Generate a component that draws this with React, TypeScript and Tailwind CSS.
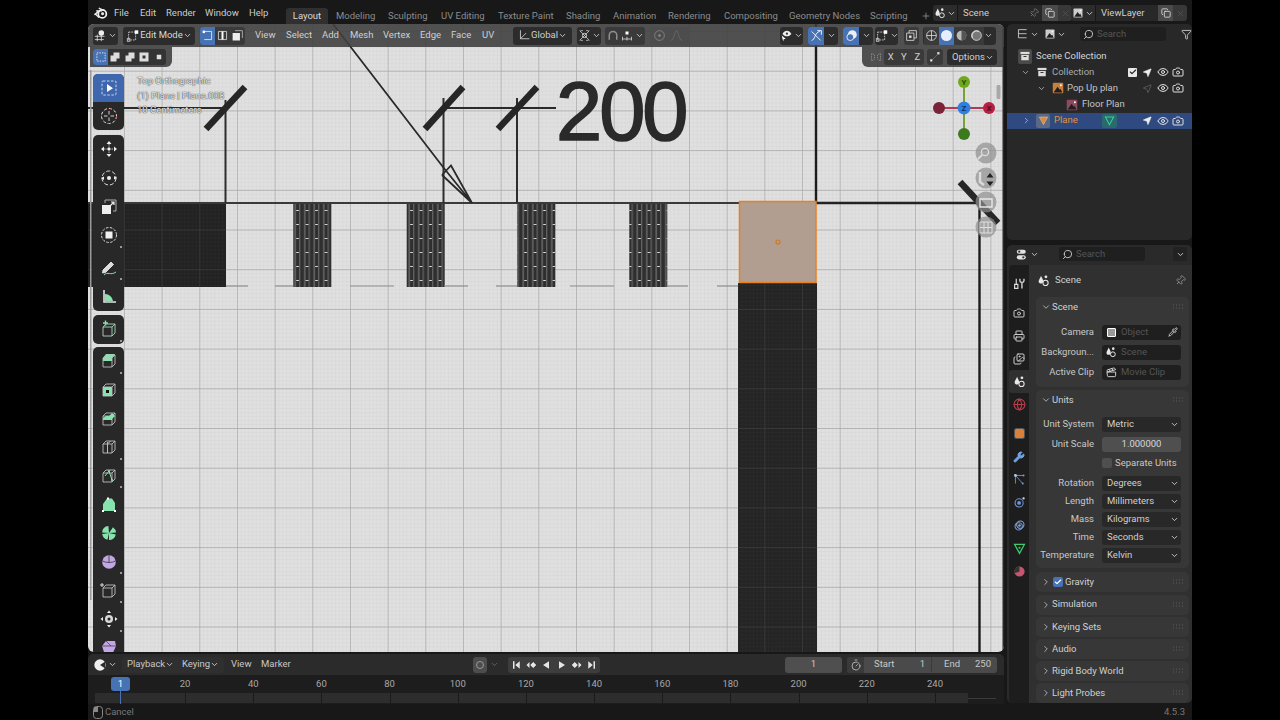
import React from "react";
import {
  Camera,
  Check,
  ChevronDown,
  ChevronRight,
  Clapperboard,
  Copy,
  Eye,
  Funnel,
  Globe,
  Images,
  MousePointer2,
  Pin,
  Pipette,
  Plus,
  Printer,
  Search,
  Timer,
  Wrench,
  X,
} from "lucide-react";

// small shared bits

const Chev = ({ className = "text-[#cfcfcf]" }: { className?: string }) => (
  <ChevronDown size={9} strokeWidth={2.4} className={`shrink-0 ${className}`} />
);

const Svg = ({ s = 16, children }: { s?: number; children: React.ReactNode }) => (
  <svg width={s} height={s} viewBox="0 0 16 16" fill="none" className="shrink-0">
    {children}
  </svg>
);

const BlenderLogo = () => (
  <Svg s={14}>
    <circle cx="9.5" cy="9" r="4.6" stroke="#eee" strokeWidth="2" />
    <circle cx="9.8" cy="8.8" r="1.7" fill="#eee" />
    <path d="M1 9.6 L6 5.8 M3 5.6 H8.5 M6 2.6 L11 5 M5.5 13 L2.5 10" stroke="#eee" strokeWidth="1.6" strokeLinecap="round" />
  </Svg>
);

const SceneIcon = ({ s = 14 }: { s?: number }) => (
  <Svg s={s}>
    <path d="M5 2 C6 5 8 6.5 7.5 9.5 C7 12.5 2.5 12.5 2 9.5 C1.8 7 4 5 5 2Z" fill="#e8e8e8" />
    <circle cx="11" cy="3.5" r="1.7" fill="#e8e8e8" />
    <circle cx="10.5" cy="11" r="3.2" stroke="#e8e8e8" strokeWidth="1.3" />
  </Svg>
);

const CollectionIcon = ({ s = 14 }: { s?: number }) => (
  <Svg s={s}>
    <rect x="2" y="2.5" width="12" height="3" fill="#ddd" />
    <path d="M3 6.5 H13 V13.5 H3Z" fill="#ddd" />
    <rect x="6" y="8" width="4" height="1.3" fill="#333" />
  </Svg>
);

const ImageIcon = ({ bg, s = 14 }: { bg: string; s?: number }) => (
  <Svg s={s}>
    <rect x="2" y="2" width="12" height="12" fill={bg} rx="1" />
    <path d="M3 13 L7.5 6.5 L10 10 L11 9 L13 13Z" fill="#1f1f1f" />
    <circle cx="11.3" cy="4.8" r="1.1" fill="#fff" />
  </Svg>
);

const BoxModeIcon = () => (
  <Svg s={14}>
    <path d="M3 3.5 H11 V12.5 H3Z" stroke="#ccc" strokeWidth="1" strokeDasharray="2 1" />
    <rect x="1.5" y="11" width="3" height="3" fill="none" stroke="#ccc" />
    <rect x="10" y="1.5" width="4" height="4" fill="#fff" />
  </Svg>
);

const Grip = () => (
  <svg width="10" height="6" viewBox="0 0 10 6" className="shrink-0">
    {[0, 3, 6, 9].map((x) =>
      [0.5, 3.5].map((y) => <rect key={`${x}${y}`} x={x} y={y} width="1" height="1" fill="#5c5c5c" />),
    )}
  </svg>
);

// tool shelf

const cube = "M3 6 L6 3 H15 V12 L12 15 H3Z M3 6 H12 V15 M12 6 L15 3";

const ToolIcon = ({ children, more }: { children: React.ReactNode; more?: boolean }) => (
  <div className="relative flex h-[28.7px] items-center justify-center">
    <svg width="18" height="18" viewBox="0 0 18 18" fill="none">
      {children}
    </svg>
    {more && <span className="absolute right-[2px] bottom-[2px] h-[2px] w-[2px] bg-[#999]" />}
  </div>
);

const Outline = () => <path d={cube} stroke="#bdbdbd" strokeWidth="0.9" />;

const ToolShelf = () => (
  <div className="absolute top-[50px] bottom-0 left-[5px] z-10 flex w-[31px] flex-col gap-[5px] overflow-hidden">
    <div className="rounded-[5px] bg-[#282828]">
      <div className="flex h-[28px] items-center justify-center rounded-t-[5px] bg-[#3e67ad]">
        <svg width="18" height="18" viewBox="0 0 18 18" fill="none">
          <rect x="2" y="2" width="14" height="14" rx="1" stroke="#c9d6ee" strokeDasharray="2.5 1.5" />
          <path d="M7 5 L13 9.2 L7 13Z" fill="#fff" />
        </svg>
      </div>
      <div className="flex h-[28px] items-center justify-center">
        <svg width="18" height="18" viewBox="0 0 18 18" fill="none">
          <circle cx="9" cy="9" r="7.5" stroke="#e9e9e9" strokeDasharray="3 2" />
          <circle cx="9" cy="9" r="7.5" stroke="#d8564f" strokeDasharray="2 10" />
          <path d="M9 4 V7.5 M9 10.5 V14 M4 9 H7.5 M10.5 9 H14" stroke="#d5d5d5" />
        </svg>
      </div>
    </div>
    <div className="rounded-[5px] bg-[#282828]">
      <ToolIcon>
        <path d="M9 1 L11.5 4 H6.5Z M9 17 L6.5 14 H11.5Z M1 9 L4 6.5 V11.5Z M17 9 L14 11.5 V6.5Z" fill="#eee" />
        <path d="M9 4 V14 M4 9 H14" stroke="#bbb" strokeDasharray="1.5 1" />
        <circle cx="9" cy="9" r="1.5" fill="#eee" />
      </ToolIcon>
      <ToolIcon>
        <circle cx="9" cy="9" r="7" stroke="#ddd" strokeDasharray="4 2" />
        <circle cx="9" cy="9" r="2" fill="#eee" />
        <path d="M1 9 L4 7.5 V11Z M17 9 L14 7 V10.5Z" fill="#eee" />
      </ToolIcon>
      <ToolIcon>
        <rect x="2" y="7" width="9" height="9" fill="#eee" />
        <path d="M5 5 V2 H16 V13 H13" stroke="#aaa" />
        <path d="M9 9 L14 4 M11 4 H14 V7" stroke="#eee" strokeWidth="1.2" />
      </ToolIcon>
      <ToolIcon more>
        <circle cx="9" cy="9" r="7.5" stroke="#ddd" strokeDasharray="2.5 1.5" />
        <rect x="5.5" y="5.5" width="7" height="7" fill="#f0f0f0" />
      </ToolIcon>
      <div className="mt-[4px]">
        <ToolIcon more>
          <path d="M3 11 L11 3 L13.5 5.5 L5.5 13.5 L2.5 14Z" stroke="#eee" fill="#ddd" strokeWidth="0.8" />
          <path d="M4 16 C8 12 10 17 16 13" stroke="#8fd8ae" />
        </ToolIcon>
      </div>
      <ToolIcon>
        <path d="M4 2 V14 H16" stroke="#e2e2e2" strokeWidth="1.6" />
        <path d="M5 13 V6 A8 8 0 0 1 13 13Z" fill="#8be0b0" />
      </ToolIcon>
    </div>
    <div className="mt-[-1px] rounded-[5px] bg-[#282828]">
      <ToolIcon more>
        <path d="M3 7 L6 4 H15 V13 L12 16 H3Z M3 7 H12 V16 M12 7 L15 4" stroke="#a9d9bd" strokeWidth="0.9" />
        <path d="M3 3 H8 M5.5 0.5 V5.5" stroke="#86e3ad" strokeWidth="1.4" />
      </ToolIcon>
    </div>
    <div className="mt-[-2px] flex-1 rounded-t-[5px] bg-[#282828]">
      <ToolIcon more>
        <path d="M3 6 L6 2 H15 L12 6Z M3 6 H12 V9 H3Z" fill="#86e3ad" />
        <Outline />
      </ToolIcon>
      <ToolIcon>
        <Outline />
        <rect x="3" y="6" width="9" height="9" fill="#86e3ad" />
        <rect x="6" y="9" width="3" height="3" fill="#111" />
      </ToolIcon>
      <ToolIcon>
        <Outline />
        <path d="M3 10 V8 L6 6 H9 L12 9 V10Z M9 6 L12 3 L15 6 L12 9Z" fill="#86e3ad" />
      </ToolIcon>
      <ToolIcon more>
        <Outline />
        <path d="M7.5 4 V15 M7.5 6 L10.5 3" stroke="#bdbdbd" />
      </ToolIcon>
      <ToolIcon more>
        <Outline />
        <path d="M5 9 L9 4 L12 13" stroke="#86e3ad" />
        <circle cx="9" cy="4" r="1" fill="#86e3ad" />
        <circle cx="12" cy="13" r="1" fill="#86e3ad" />
      </ToolIcon>
      <ToolIcon>
        <path d="M3 15 V8 L7 2.5 H12 L15 7 V15Z" fill="#86e3ad" />
        <rect x="2" y="14" width="2" height="2" fill="#fff" />
        <rect x="14" y="14" width="2" height="2" fill="#fff" />
        <rect x="7" y="1.5" width="2" height="2" fill="#fff" />
      </ToolIcon>
      <ToolIcon>
        <path d="M9 9 L8.4 2 A7 7 0 0 0 2.1 8.4Z M9 9 L2.2 10 A7 7 0 0 0 7.5 15.8Z M9 9 L9 16 A7 7 0 0 0 15.8 10.5Z M9 9 L16 8.6 A7 7 0 0 0 13 3.2Z" fill="#86e3ad" />
      </ToolIcon>
      <ToolIcon more>
        <circle cx="9" cy="9" r="6.8" fill="#c3a6e6" />
        <path d="M2.5 8 C6 10 12 10 15.5 8 M9 2.5 V9" stroke="#333" strokeWidth="0.8" />
      </ToolIcon>
      <ToolIcon more>
        <Outline />
        <path d="M0 3 H4 M2 1 V5" stroke="#ddd" />
      </ToolIcon>
      <ToolIcon more>
        <circle cx="9" cy="9" r="4" fill="#d8d8d8" />
        <circle cx="9" cy="9" r="1.5" fill="#222" />
        <path d="M9 0.5 L11 3 H7Z M9 17.5 L7 15 H11Z M0.5 9 L3 7 V11Z M17.5 9 L15 11 V7Z" fill="#eee" />
      </ToolIcon>
      <ToolIcon>
        <path d="M2 7 L6 2 H15 L16 7 L12 16 H5Z" fill="#c3a6e6" />
        <path d="M6 2 L11 7 H2 M11 7 L16 7" stroke="#333" strokeWidth="0.7" />
      </ToolIcon>
    </div>
  </div>
);

// viewport drawing, coordinates are page pixels

const Drawing = () => {
  const doors = [293.3, 406.7, 517.3, 629.3];
  const dashes = [[226, 248], [275, 293], [350, 394], [444, 468], [496, 517], [570, 614], [667, 688], [717, 738]];
  const ticks = [
    [206, 129, 245, 87],
    [425, 129, 463, 87],
    [498, 129, 537, 87],
    [960, 182, 998, 223],
  ];
  return (
    <svg viewBox="88 24 916 628" className="absolute inset-0 h-full w-full">
      <defs>
        <pattern id="minor" patternUnits="userSpaceOnUse" x="312.3" y="70.7" width="3.767" height="3.97">
          <path d="M0 0 H3.767 M0 0 V3.97" stroke="#cfcfcf" strokeWidth="0.6" />
        </pattern>
        <pattern id="major" patternUnits="userSpaceOnUse" x="312.3" y="70.7" width="37.67" height="39.7">
          <path d="M0 0 H37.67 M0 0 V39.7" stroke="#a8a8a8" strokeWidth="1.4" />
        </pattern>
        <pattern id="hatch" patternUnits="userSpaceOnUse" x="293.3" y="203" width="9.5" height="14">
          <rect x="1.5" width="0.9" height="14" fill="#8c8c8c" />
          <rect x="6" width="0.9" height="14" fill="#777" />
          <rect x="3" y="7" width="2.5" height="1" fill="#e2e2e2" />
        </pattern>
      </defs>
      <rect x="88" y="24" width="916" height="628" fill="#e0e0e0" />
      <rect x="88" y="24" width="916" height="628" fill="url(#minor)" />
      <rect x="88" y="24" width="916" height="628" fill="url(#major)" />

      <rect x="88" y="203" width="138" height="84" fill="#222" />
      <rect x="738" y="283" width="79" height="369" fill="#242424" />
      <rect x="88" y="203" width="138" height="84" fill="url(#minor)" opacity="0.08" />
      <rect x="738" y="283" width="79" height="369" fill="url(#minor)" opacity="0.08" />
      <rect x="88" y="203" width="138" height="84" fill="url(#major)" opacity="0.16" />
      <rect x="738" y="283" width="79" height="369" fill="url(#major)" opacity="0.16" />

      {doors.map((x) => (
        <g key={x}>
          <rect x={x} y="203" width="38" height="84" fill="#2f2f2f" />
          <rect x={x} y="203" width="38" height="84" fill="url(#hatch)" />
        </g>
      ))}
      {dashes.map(([a, b]) => (
        <path key={a} d={`M${a} 286 H${b}`} stroke="#8c8c8c" strokeWidth="1.2" />
      ))}

      <path d="M88 203 H739" stroke="#3a3a3a" strokeWidth="1.8" />
      <path d="M816 203 H980" stroke="#222" strokeWidth="2.6" />
      <path d="M88 108 H226 M443 108 H556" stroke="#2a2a2a" strokeWidth="2" />
      <path d="M225.5 100 V203 M443.5 98 V203 M517 98 V203" stroke="#2d2d2d" strokeWidth="2" />
      <path d="M816 24 V203 M979.5 203 V652" stroke="#1c1c1c" strokeWidth="2.4" />
      {ticks.map(([a, b, c, d]) => (
        <path key={a} d={`M${a} ${b} L${c} ${d}`} stroke="#262626" strokeWidth="6.5" />
      ))}
      <path d="M333 24 L443 167 M443 167 L472 203 M442 175 L451 165.5 L472 203 L442 175" fill="none" stroke="#2a2a2a" strokeWidth="1.8" />

      <rect x="739.5" y="201.5" width="76.5" height="81" fill="#b19e91" stroke="#e8801f" strokeWidth="1.5" />
      <circle cx="778" cy="242" r="2" fill="none" stroke="#d9741a" strokeWidth="1.2" />

      <rect x="90" y="70" width="1.5" height="530" fill="#9a9a9a" />
      <rect x="996.5" y="85" width="4" height="14" rx="1" fill="#a8a8a8" />
      <rect x="1002.5" y="24" width="2" height="628" fill="#2a2a2a" />

      {/* axis gizmo */}
      <path d="M964 82 V134" stroke="#6f9a25" strokeWidth="1.8" />
      <path d="M939 108 H989" stroke="#b33a55" strokeWidth="1.8" />
      <circle cx="964" cy="82" r="6" fill="#6fa81c" />
      <circle cx="964" cy="134" r="6" fill="#3c7a1e" />
      <circle cx="989" cy="108" r="6" fill="#b81f45" />
      <circle cx="939" cy="108" r="6" fill="#7b2238" />
      <circle cx="964" cy="108" r="6.5" fill="#2f7fe0" />

      {/* navigation buttons */}
      {[153, 178, 202, 227].map((y) => (
        <circle key={y} cx="986" cy={y} r="10.5" fill="#8f8f8f" opacity="0.7" />
      ))}
      <circle cx="985" cy="152" r="3.6" fill="none" stroke="#ddd" strokeWidth="1.3" />
      <path d="M982 155 L978 159" stroke="#ddd" strokeWidth="1.8" />
      <path d="M990 173 L986.5 177.5 H993.5Z M990 186 L986.5 181.5 H993.5Z" fill="#222" />
      <path d="M980 172 V182 L984 185" stroke="#ddd" strokeWidth="2.4" fill="none" />
      <path d="M980 199 H992 V207 H980Z" fill="none" stroke="#e8e8e8" strokeWidth="1.4" />
      <path d="M980 222 H992 V233 H980Z M984 222 V233 M988 222 V233 M980 227.5 H992" fill="none" stroke="#dfdfdf" strokeWidth="1" />
      <text x="964" y="85" textAnchor="middle" fontFamily="Roboto, sans-serif" fontSize="8" fontWeight="700" fill="#2c4a0c">Y</text>
      <text x="964" y="111" textAnchor="middle" fontFamily="Roboto, sans-serif" fontSize="8" fontWeight="700" fill="#0e2f5e">Z</text>
      <text x="989" y="111" textAnchor="middle" fontFamily="Roboto, sans-serif" fontSize="8" fontWeight="700" fill="#5a0c20">X</text>
    </svg>
  );
};

// viewport header

const Btn = ({ className, children }: { className: string; children: React.ReactNode }) => (
  <div className={`flex h-[18px] shrink-0 items-center justify-center rounded-[3px] ${className}`}>{children}</div>
);

const menuItems = [
  { label: "View", cls: "w-[31px]" },
  { label: "Select", cls: "w-[36px]" },
  { label: "Add", cls: "w-[28px]" },
  { label: "Mesh", cls: "w-[33px]" },
  { label: "Vertex", cls: "w-[37px]" },
  { label: "Edge", cls: "w-[31px]" },
  { label: "Face", cls: "w-[31px]" },
  { label: "UV", cls: "w-[31px]" },
];

const ViewportHeader = () => (
  <div className="relative z-10 flex h-[23px] items-center bg-[#404040]/90 pl-[5px] text-[#cfcfcf]">
    <Btn className="w-[25px] gap-[1px] bg-[#2c2c2c]">
      <Svg s={13}>
        <path d="M1 9 H13 M1 13 H12 M4 7 V15 M9 7 V15" stroke="#ddd" />
        <circle cx="9" cy="5" r="3.4" fill="#eee" />
      </Svg>
      <Chev />
    </Btn>
    <Btn className="ml-[5px] w-[72px] justify-between whitespace-nowrap bg-[#2c2c2c] px-[3px]">
      <BoxModeIcon />
      <span className="text-[#d8d8d8]">Edit Mode</span>
      <Chev />
    </Btn>
    <div className="ml-[5px] flex h-[18px] w-[45px] shrink-0 overflow-hidden rounded-[3px] bg-[#3a3a3a]">
      <div className="flex w-[15px] items-center justify-center bg-[#4772b3]">
        <Svg s={13}>
          <path d="M4 3 H13 V13 H4" stroke="#eee" />
          <rect x="2" y="2" width="3" height="3" fill="#fff" />
        </Svg>
      </div>
      <div className="flex w-[15px] items-center justify-center">
        <Svg s={13}>
          <path d="M3 3 H13 V13 H3Z" stroke="#ddd" />
          <path d="M8 3 V13" stroke="#fff" strokeWidth="2.4" />
        </Svg>
      </div>
      <div className="flex w-[15px] items-center justify-center">
        <Svg s={13}>
          <path d="M2 5 H11 V14 H2Z" fill="#eee" />
          <path d="M5 2 H14 V11" stroke="#bbb" />
        </Svg>
      </div>
    </div>
    <div className="ml-[10px] flex">
      {menuItems.map((m) => (
        <span key={m.label} className={m.cls}>
          {m.label}
        </span>
      ))}
    </div>
    <Btn className="w-[59px] justify-between bg-[#2c2c2c] pr-[3px] pl-[3px]">
      <Svg s={13}>
        <path d="M3 1.5 V12 H14 M3 12 L10 5" stroke="#ddd" />
      </Svg>
      <span>Global</span>
      <Chev />
    </Btn>
    <Btn className="ml-[5px] w-[24px] gap-[1px] bg-[#2c2c2c]">
      <Svg s={13}>
        <circle cx="8" cy="8" r="2.6" stroke="#eee" />
        <path d="M2 2 L14 14 M14 2 L2 14 M3 2 H6 M10 2 H13 M3 14 H6 M10 14 H13" stroke="#ddd" strokeWidth="0.9" />
      </Svg>
      <Chev />
    </Btn>
    <Btn className="ml-[4px] w-[40px] gap-[2px] bg-[#3a3a3a]">
      <Svg s={12}>
        <path d="M3 13 V7 A5 5 0 0 1 13 7 V13" stroke="#8f8f8f" strokeWidth="2" />
      </Svg>
      <Svg s={12}>
        <path d="M2 12 H14 M2 9 V14 M14 9 V14 M8 9 V14" stroke="#e0e0e0" />
        <rect x="6" y="2" width="4" height="4" fill="#fff" />
      </Svg>
      <Chev />
    </Btn>
    <Btn className="ml-[5px] w-[39px] justify-start gap-[4px] bg-[#4d4d4d] pl-[3px]">
      <Svg s={13}>
        <circle cx="8" cy="8" r="6" stroke="#8a8a8a" />
        <circle cx="8" cy="8" r="1.6" fill="#8a8a8a" />
      </Svg>
      <Svg s={13}>
        <path d="M1 14 C5 14 6 2 8 2 C10 2 11 14 15 14" stroke="#6d6d6d" />
      </Svg>
    </Btn>

    <Btn className="ml-[91px] w-[23px] gap-[1px] bg-[#2c2c2c]">
      <Svg s={13}>
        <path d="M3 6 C6 1 11 1 14 6 C11 10 6 10 3 6Z" fill="#eee" />
        <circle cx="8.5" cy="5.7" r="1.4" fill="#333" />
        <path d="M2 8 L7 12 L4.5 12.5 L4 15.5Z" fill="#fff" />
      </Svg>
      <Chev />
    </Btn>
    <Btn className="ml-[5px] w-[30px] overflow-hidden bg-[#2c2c2c]">
      <div className="flex h-full w-[16px] items-center justify-center bg-[#4772b3]">
        <Svg s={13}>
          <path d="M2 14 C6 14 6 4 12 3 M2 3 L13 14 M9 2 H14 V7" stroke="#fff" strokeWidth="1.1" />
        </Svg>
      </div>
      <div className="flex flex-1 justify-center">
        <Chev />
      </div>
    </Btn>
    <Btn className="ml-[5px] w-[30px] overflow-hidden bg-[#2c2c2c]">
      <div className="flex h-full w-[16px] items-center justify-center bg-[#4772b3]">
        <Svg s={13}>
          <circle cx="9" cy="7" r="5.5" fill="#eee" />
          <circle cx="6.5" cy="10" r="4.2" stroke="#fff" fill="#4772b3" />
        </Svg>
      </div>
      <div className="flex flex-1 justify-center">
        <Chev />
      </div>
    </Btn>
    <Btn className="ml-[2px] w-[23px] gap-[1px] bg-[#2c2c2c]">
      <BoxModeIcon />
      <Chev />
    </Btn>
    <Btn className="ml-[6px] w-[15px] bg-[#3a3a3a]">
      <Svg s={13}>
        <path d="M2 5 H11 V14 H2Z M5 5 V2 H14 V11 H11" stroke="#ddd" />
        <rect x="5" y="8" width="3" height="3" fill="#ddd" />
      </Svg>
    </Btn>
    <Btn className="ml-[4px] w-[73px] justify-between bg-[#2c2c2c] pr-[3px]">
      <div className="flex h-full w-[60px] bg-[#3a3a3a]">
        <div className="flex w-[15px] items-center justify-center">
          <Svg s={13}>
            <circle cx="8" cy="8" r="6" stroke="#ddd" />
            <path d="M2 8 H14 M8 2 V14" stroke="#ddd" />
          </Svg>
        </div>
        <div className="flex w-[15px] items-center justify-center bg-[#4772b3]">
          <span className="h-[11px] w-[11px] rounded-full bg-[#e6eefb]" />
        </div>
        <div className="flex w-[15px] items-center justify-center">
          <Svg s={13}>
            <circle cx="8" cy="8" r="6" fill="#bbb" />
            <path d="M8 2 A6 6 0 0 1 8 14Z" fill="#555" />
          </Svg>
        </div>
        <div className="flex w-[15px] items-center justify-center">
          <Svg s={13}>
            <circle cx="8" cy="8" r="6" fill="#777" stroke="#ddd" />
            <path d="M3 11 A6 6 0 0 1 11 3" stroke="#ddd" strokeWidth="1.2" />
          </Svg>
        </div>
      </div>
      <Chev />
    </Btn>
  </div>
);

const ToolSettingsRow = () => (
  <div className="relative z-10 flex items-start justify-between pl-[2px]">
    <div className="flex h-[20px] w-[82px] items-center rounded-br-[6px] bg-[#404040]/90 pl-[3px]">
      <div className="flex h-[16px] w-[73px] items-center overflow-hidden rounded-[3px] bg-[#333]">
        <div className="flex h-full w-[15px] items-center justify-center bg-[#4772b3]">
          <Svg s={12}>
            <rect x="2.5" y="2.5" width="11" height="11" stroke="#fff" strokeDasharray="2 1.4" />
          </Svg>
        </div>
        {[
          "M2 6 H10 V14 H2Z M6 2 H14 V10 H10 V6 H6Z",
          "M6 2 H14 V10 H6Z M2 6 H6 V10 H10 V14 H2Z",
          "M2 2 H14 V14 H2Z M6 6 V10 H10 V6Z",
          "M5 5 H11 V11 H5Z",
        ].map((d) => (
          <div key={d} className="flex h-full w-[14.5px] items-center justify-center">
            <Svg s={12}>
              <path d={d} fill="#ddd" fillRule="evenodd" />
            </Svg>
          </div>
        ))}
      </div>
    </div>
    <div className="mr-[1px] flex h-[20px] w-[141px] items-center rounded-bl-[6px] bg-[#404040]/90 pl-[8px] text-[#d0d0d0]">
      <Svg s={12}>
        <path d="M2 3 L6 5 V11 L2 13Z M14 3 L10 5 V11 L14 13Z" stroke="#9a9a9a" strokeDasharray="1.5 1" />
      </Svg>
      <div className="ml-[2px] flex h-[16px] w-[40px] items-center rounded-[3px] bg-[#3a3a3a]">
        <span className="w-[13.3px] text-center">X</span>
        <span className="w-[13.3px] text-center">Y</span>
        <span className="w-[13.3px] text-center">Z</span>
      </div>
      <div className="ml-[3px] flex h-[16px] w-[16px] items-center justify-center rounded-[3px] bg-[#3a3a3a]">
        <Svg s={12}>
          <path d="M3 13 L13 3" stroke="#aaa" strokeDasharray="2 2" />
          <rect x="1.5" y="11" width="3" height="3" fill="#ddd" />
          <rect x="11" y="1.5" width="3" height="3" fill="#ddd" />
        </Svg>
      </div>
      <div className="ml-[4px] flex h-[16px] w-[50px] items-center justify-between rounded-[3px] bg-[#2c2c2c] px-[5px]">
        <span>Options</span>
        <Chev />
      </div>
    </div>
  </div>
);

const Viewport = () => (
  <div className="relative h-[628px] overflow-hidden rounded-[6px]">
    <Drawing />
    <ViewportHeader />
    <ToolSettingsRow />
    <ToolShelf />
    <div className="absolute top-[50px] left-[49px] z-10 flex flex-col text-[9.5px] leading-[14.5px] text-[#ececec] [text-shadow:0_0_1px_#333,0_0_1px_#333]">
      <span>Top Orthographic</span>
      <span>(1) Plane | Plane.008</span>
      <span>10 Centimeters</span>
    </div>
    <span className="absolute top-[38px] left-[468px] font-['Liberation_Sans',sans-serif] text-[83px] leading-[100px] tracking-[-3px] text-[#2a2a2a] [-webkit-text-stroke:1.6px_#2a2a2a]">
      200
    </span>
  </div>
);

// timeline

const frames = [20, 40, 60, 80, 100, 120, 140, 160, 180, 200, 220, 240];

const Timeline = () => (
  <div className="mt-[2px] h-[50px] overflow-hidden rounded-t-[5px]">
    <div className="flex h-[21px] items-center bg-[#2b2b2b] pl-[5px] text-[#c8c8c8]">
      <div className="flex w-[24px] items-center justify-center gap-[1px]">
        <Svg s={14}>
          <circle cx="8" cy="8" r="6.5" fill="#eee" />
          <path d="M8 8 L14 4 V12Z" fill="#2b2b2b" />
        </Svg>
        <Chev />
      </div>
      <div className="ml-[5px] flex h-[16px] w-[55px] items-center justify-between rounded-l-[3px] bg-[#2f2f2f] px-[5px]">
        <span>Playback</span>
        <Chev />
      </div>
      <div className="flex h-[16px] w-[47px] items-center justify-between rounded-r-[3px] bg-[#2f2f2f] px-[5px]">
        <span>Keying</span>
        <Chev />
      </div>
      <span className="w-[30px] pl-[7px]">View</span>
      <span className="w-[40px] pl-[7px]">Marker</span>
      <div className="ml-[179px] flex h-[16px] w-[14px] items-center justify-center rounded-[3px] bg-[#4d4d4d]">
        <span className="h-[8px] w-[8px] rounded-full border border-[#999]" />
      </div>
      <div className="flex w-[14px] justify-center">
        <Chev className="text-[#666]" />
      </div>
      <div className="ml-[7px] flex h-[16px] w-[92px] items-center rounded-[3px] bg-[#3d3d3d]">
        {[
          "M4 3 H6 V13 H4Z M13 3 V13 L7 8Z",
          "M6 4 V12 L2 8Z M11 4 L15 8 L11 12 L7 8Z",
          "M12 3 V13 L4 8Z",
          "M4 3 V13 L12 8Z",
          "M5 4 L9 8 L5 12 L1 8Z M10 4 L14 8 L10 12Z",
          "M3 3 V13 L9 8Z M10 3 H12 V13 H10Z",
        ].map((d) => (
          <div key={d} className="flex w-[15.3px] justify-center">
            <Svg s={12}>
              <path d={d} fill="#e6e6e6" />
            </Svg>
          </div>
        ))}
      </div>
      <div className="ml-[185px] flex h-[16px] w-[57px] items-center justify-center rounded-[3px] bg-[#4f4f4f]">1</div>
      <div className="ml-[5px] flex h-[16px] w-[150px] items-center rounded-[3px] bg-[#4a4a4a]">
        <div className="flex h-full w-[17px] items-center justify-center rounded-l-[3px] bg-[#3a3a3a]">
          <Timer size={12} strokeWidth={1.6} />
        </div>
        <div className="flex w-[66px] justify-between pr-[5px] pl-[10px]">
          <span>Start</span>
          <span>1</span>
        </div>
        <div className="ml-[1px] flex w-[66px] justify-between border-l border-[#3a3a3a] pr-[6px] pl-[12px]">
          <span>End</span>
          <span>250</span>
        </div>
      </div>
    </div>
    <div className="relative h-[29px] bg-[#1d1d1d] text-[#a8a8a8]">
      <div className="flex h-[18px] items-center pl-[63px]">
        {frames.map((f) => (
          <span key={f} className="w-[68.18px] text-center">
            {f}
          </span>
        ))}
      </div>
      <div className="flex items-center">
        <div className="ml-[7px] flex h-[10px] w-[873px] overflow-hidden bg-[#2d2d2d] pl-[90px]">
          {frames.map((f) => (
            <span key={f} className="w-[68.18px] shrink-0 border-l border-[#1a1a1a]" />
          ))}
        </div>
        <span className="h-[1px] w-[28px] bg-[#3a3a3a]" />
      </div>
      <div className="absolute top-[2px] left-[23px] flex h-[14px] w-[19px] items-center justify-center rounded-[3px] bg-[#4772b3] text-white">
        1
      </div>
      <div className="absolute top-[16px] left-[32px] h-[13px] w-[1px] bg-[#4772b3]" />
    </div>
  </div>
);

// outliner

const Vis = ({ arrow = true }: { arrow?: boolean }) => (
  <div className="ml-auto flex w-[50px] items-center justify-between pr-[8px] text-[#e0e0e0]">
    {arrow ? (
      <MousePointer2 size={11} fill="#eee" strokeWidth={1.2} className="-scale-x-100" />
    ) : (
      <MousePointer2 size={11} strokeWidth={1} className="-scale-x-100 text-[#888]" />
    )}
    <Eye size={12} strokeWidth={2} />
    <Camera size={12} strokeWidth={2} />
  </div>
);

const Outliner = () => (
  <div className="h-[216px] overflow-hidden rounded-[5px] bg-[#282828] text-[#c4c4c4]">
    <div className="flex h-[20px] items-center pl-[9px]">
      <div className="flex w-[21px] items-center gap-[1px]">
        <Svg s={13}>
          <path d="M3 2 H13 M5 7 H13 M5 12 H13 M3 2 V12 H5 M3 7 H5" stroke="#ddd" />
        </Svg>
        <Chev />
      </div>
      <div className="ml-[7px] flex w-[21px] items-center gap-[1px]">
        <ImageIcon bg="#ccc" s={12} />
        <Chev />
      </div>
      <div className="ml-[15px] flex h-[14px] w-[87px] items-center gap-[3px] rounded-[3px] bg-[#1f1f1f] pl-[3px] text-[#555]">
        <Search size={11} className="-scale-x-100 text-[#ccc]" />
        <span>Search</span>
      </div>
      <Funnel size={11} className="ml-[15px] text-[#ccc]" />
    </div>
    <div className="mt-[4px] flex h-[16px] items-center pl-[11px]">
      <div className="flex h-[15px] w-[14px] items-center justify-center rounded-[2px] bg-[#4a4a4a]">
        <CollectionIcon s={12} />
      </div>
      <span className="ml-[4px] text-[#d5d5d5]">Scene Collection</span>
    </div>
    <div className="flex h-[16px] items-center pl-[14px]">
      <ChevronDown size={9} />
      <span className="ml-[6px]">
        <CollectionIcon s={12} />
      </span>
      <span className="ml-[4px] text-[#aaa]">Collection</span>
      <div className="ml-auto flex items-center">
        <span className="mr-[5px] flex h-[9px] w-[9px] items-center justify-center rounded-[1px] bg-[#e8e8e8] text-[#222]">
          <Check size={8} strokeWidth={3.5} />
        </span>
        <Vis />
      </div>
    </div>
    <div className="flex h-[16.5px] items-center pl-[30px]">
      <ChevronDown size={9} />
      <span className="ml-[5px]">
        <ImageIcon bg="#c77f3e" />
      </span>
      <span className="ml-[2px]">Pop Up plan</span>
      <Vis arrow={false} />
    </div>
    <div className="flex h-[16px] items-center pl-[58px]">
      <ImageIcon bg="#8d4a5e" />
      <span className="ml-[3px]">Floor Plan</span>
    </div>
    <div className="flex h-[16px] items-center bg-[#2f4a80] pl-[15px]">
      <ChevronRight size={9} />
      <span className="ml-[5px] flex h-[14px] w-[14px] items-center justify-center rounded-[2px] bg-[#5a6a86]">
        <Svg s={11}>
          <path d="M2 3 H14 L8 14Z" fill="#d98a3f" stroke="#e8b98b" />
        </Svg>
      </span>
      <span className="ml-[4px] text-[#e0913f]">Plane</span>
      <span className="ml-[24px] flex h-[14px] w-[15px] items-center justify-center rounded-[2px] bg-[#2a6a6e]">
        <Svg s={11}>
          <path d="M2 3 H14 L8 14Z" stroke="#35d29a" strokeWidth="1.5" />
        </Svg>
      </span>
      <Vis />
    </div>
  </div>
);

// properties

const TabIcon = ({ active, children }: { active?: boolean; children: React.ReactNode }) => (
  <div className={`flex h-[23px] items-center justify-center rounded-l-[3px] ${active ? "bg-[#303030]" : ""}`}>
    {children}
  </div>
);

const Tabs = () => (
  <div className="mt-[2px] ml-[2px] flex w-[20px] shrink-0 flex-col gap-[6px] rounded-l-[4px] bg-[#1d1d1d] pt-[7px] text-[#ccc]">
    <TabIcon>
      <Svg s={13}>
        <path d="M4 2 V9 M2 9 H6 V14 H2Z" stroke="#ddd" strokeWidth="1.4" />
        <path d="M11 14 V7 M8.5 2 V5 C8.5 7 13.5 7 13.5 5 V2" stroke="#ddd" strokeWidth="1.6" />
      </Svg>
    </TabIcon>
    <div className="flex flex-col">
      <TabIcon>
        <Camera size={12} />
      </TabIcon>
      <TabIcon>
        <Printer size={12} />
      </TabIcon>
      <TabIcon>
        <Images size={12} />
      </TabIcon>
      <TabIcon active>
        <SceneIcon s={13} />
      </TabIcon>
      <TabIcon>
        <Globe size={13} className="text-[#b5404c]" />
      </TabIcon>
    </div>
    <div className="flex flex-col">
      <TabIcon>
        <span className="h-[9px] w-[9px] rounded-[1px] bg-[#d9803a] outline outline-[#555]" />
      </TabIcon>
      <TabIcon>
        <Wrench size={12} fill="#6da4e8" className="text-[#6da4e8]" />
      </TabIcon>
      <TabIcon>
        <Svg s={13}>
          <path d="M3 3 L13 3 M3 3 L12 13 M3 3 V13" stroke="#7a9fd6" />
          <circle cx="3" cy="3" r="1.7" fill="#b6cdf0" />
          <circle cx="13" cy="3" r="1.2" fill="#7a9fd6" />
          <circle cx="12" cy="13" r="1.2" fill="#7a9fd6" />
        </Svg>
      </TabIcon>
      <TabIcon>
        <Svg s={13}>
          <circle cx="7.5" cy="8.5" r="5" stroke="#6d94d4" strokeWidth="1.3" />
          <circle cx="7.5" cy="8.5" r="2.4" fill="#6d94d4" />
          <circle cx="13" cy="3" r="1.4" fill="#ddd" />
        </Svg>
      </TabIcon>
      <TabIcon>
        <Svg s={13}>
          <circle cx="7" cy="9" r="4.5" stroke="#6d94d4" strokeWidth="1.3" />
          <circle cx="9" cy="7" r="4.5" stroke="#88a8df" strokeWidth="1.3" />
          <circle cx="8" cy="8" r="1.6" fill="#88a8df" />
        </Svg>
      </TabIcon>
      <TabIcon>
        <Svg s={13}>
          <path d="M2 3 H14 L8 14Z" stroke="#3ecb6d" strokeWidth="1.6" />
          <circle cx="8" cy="7" r="1.3" fill="#3ecb6d" />
        </Svg>
      </TabIcon>
      <TabIcon>
        <Svg s={13}>
          <circle cx="8" cy="8" r="6.3" fill="#c4566f" />
          <path d="M8 8 V1.7 A6.3 6.3 0 0 0 2 10Z" fill="#333" />
        </Svg>
      </TabIcon>
    </div>
  </div>
);

const PanelHead = ({ title, open = true, check }: { title: string; open?: boolean; check?: boolean }) => (
  <div className="flex h-[20px] items-center pr-[6px] pl-[5px] text-[#d0d0d0]">
    {open ? <ChevronDown size={10} strokeWidth={1.8} /> : <ChevronRight size={10} strokeWidth={1.8} />}
    {check && (
      <span className="ml-[2px] flex h-[10px] w-[10px] items-center justify-center rounded-[2px] bg-[#4772b3] text-white">
        <Check size={8} strokeWidth={3.5} />
      </span>
    )}
    <span className={check ? "ml-[2px]" : "ml-[1px]"}>{title}</span>
    <span className="ml-auto">
      <Grip />
    </span>
  </div>
);

const Row = ({ label, cls, children }: { label: string; cls: string; children: React.ReactNode }) => (
  <div className={`flex items-center ${cls}`}>
    <span className="mr-[8px] w-[58px] whitespace-nowrap text-right text-[#c8c8c8]">{label}</span>
    {children}
  </div>
);

const DataField = ({ icon, text, extra }: { icon: React.ReactNode; text: string; extra?: React.ReactNode }) => (
  <div className="flex h-[15px] w-[79px] items-center rounded-[3px] bg-[#1f1f1f] pl-[2px]">
    <span className="flex w-[14px] justify-center">{icon}</span>
    <span className="ml-[3px] text-[#555]">{text}</span>
    {extra && <span className="mr-[3px] ml-auto">{extra}</span>}
  </div>
);

const Select = ({ value }: { value: string }) => (
  <div className="flex h-[15px] w-[79px] items-center justify-between rounded-[3px] bg-[#282828] pr-[2px] pl-[5px] text-[#cfcfcf]">
    <span>{value}</span>
    <Chev />
  </div>
);

const collapsed = ["Simulation", "Keying Sets", "Audio", "Rigid Body World", "Light Probes"];

const unitRows = [
  { label: "Rotation", value: "Degrees" },
  { label: "Length", value: "Millimeters" },
  { label: "Mass", value: "Kilograms" },
  { label: "Time", value: "Seconds" },
  { label: "Temperature", value: "Kelvin" },
];

const Properties = () => (
  <div className="mt-[5px] h-[458px] overflow-hidden rounded-[5px] bg-[#2a2a2a]">
    <div className="flex h-[18px] items-center pl-[9px]">
      <div className="flex w-[21px] items-center gap-[1px]">
        <Svg s={13}>
          <rect x="1" y="2" width="11" height="5" rx="2.5" fill="#e2e2e2" />
          <rect x="1" y="9" width="11" height="5" rx="2.5" fill="#e2e2e2" />
          <circle cx="4" cy="4.5" r="1.4" fill="#333" />
          <circle cx="9" cy="11.5" r="1.4" fill="#333" />
        </Svg>
        <Chev />
      </div>
      <div className="ml-[22px] flex h-[14px] w-[86px] items-center gap-[3px] rounded-[3px] bg-[#1f1f1f] pl-[3px] text-[#555]">
        <Search size={11} className="-scale-x-100 text-[#ccc]" />
        <span>Search</span>
      </div>
      <div className="ml-[28px] flex h-[14px] w-[14px] items-center justify-center rounded-[2px] bg-[#222]">
        <Chev />
      </div>
    </div>
    <div className="flex h-[440px]">
      <Tabs />
      <div className="mt-[2px] flex flex-1 flex-col overflow-hidden bg-[#303030] pr-[3px] pl-[7px]">
        <div className="flex h-[30px] shrink-0 items-center pr-[3px] pl-[1px] text-[#d2d2d2]">
          <SceneIcon s={13} />
          <span className="ml-[5px]">Scene</span>
          <Pin size={11} className="ml-auto rotate-45 text-[#8a8a8a]" />
        </div>
        <div className="mt-[2px] flex flex-col gap-[2.2px]">
          <div className="rounded-[5px] bg-[#373737] pb-[5px]">
            <PanelHead title="Scene" />
            <div className="mt-[5px]">
              <Row label="Camera" cls="h-[20px]">
                <DataField
                  icon={<span className="block h-[9px] w-[9px] rounded-[1px] border border-white bg-[#999]" />}
                  text="Object"
                  extra={<Pipette size={10} className="text-[#ddd]" />}
                />
              </Row>
              <Row label="Backgroun..." cls="h-[20px]">
                <DataField icon={<SceneIcon s={12} />} text="Scene" />
              </Row>
              <Row label="Active Clip" cls="h-[20px]">
                <DataField icon={<Clapperboard size={11} className="text-[#ddd]" />} text="Movie Clip" />
              </Row>
            </div>
          </div>
          <div className="mt-[1px] rounded-[5px] bg-[#373737] pb-[4px]">
            <PanelHead title="Units" />
            <div className="mt-[4px]">
              <Row label="Unit System" cls="h-[20px]">
                <Select value="Metric" />
              </Row>
              <Row label="Unit Scale" cls="h-[20px]">
                <div className="flex h-[15px] w-[79px] items-center justify-center rounded-[3px] bg-[#4f4f4f] text-[#d8d8d8]">
                  1.000000
                </div>
              </Row>
              <div className="flex h-[18px] items-center pl-[66px]">
                <span className="h-[10px] w-[10px] rounded-[2px] bg-[#4f4f4f]" />
                <span className="ml-[3px] text-[#c8c8c8]">Separate Units</span>
              </div>
              <div className="mt-[2px]">
                {unitRows.map((r) => (
                  <Row key={r.label} label={r.label} cls="h-[18px]">
                    <Select value={r.value} />
                  </Row>
                ))}
              </div>
            </div>
          </div>
          <div className="mt-[2px] rounded-[5px] bg-[#373737]">
            <PanelHead title="Gravity" open={false} check />
          </div>
          {collapsed.map((title) => (
            <div key={title} className="rounded-[5px] bg-[#373737]">
              <PanelHead title={title} open={false} />
            </div>
          ))}
        </div>
      </div>
    </div>
  </div>
);

// top bar

const appMenu = [
  { label: "File", cls: "w-[26px]" },
  { label: "Edit", cls: "w-[26px]" },
  { label: "Render", cls: "w-[39px]" },
  { label: "Window", cls: "w-[44px]" },
  { label: "Help", cls: "w-[37px]" },
];

const workspaces = [
  { label: "Modeling", cls: "w-[52px]" },
  { label: "Sculpting", cls: "w-[53px]" },
  { label: "UV Editing", cls: "w-[57px]" },
  { label: "Texture Paint", cls: "w-[68px]" },
  { label: "Shading", cls: "w-[47px]" },
  { label: "Animation", cls: "w-[55px]" },
  { label: "Rendering", cls: "w-[56px]" },
  { label: "Compositing", cls: "w-[65px]" },
  { label: "Geometry Nodes", cls: "w-[81px]" },
  { label: "Scripting", cls: "w-[51px]" },
];

const TopBar = () => (
  <div className="flex h-[24px] shrink-0 items-stretch text-[#8c8c8c]">
    <div className="flex w-[26px] items-center justify-center pt-[2px]">
      <BlenderLogo />
    </div>
    {appMenu.map((m) => (
      <div key={m.label} className={`flex items-center pt-[2px] text-[#cccccc] ${m.cls}`}>
        {m.label}
      </div>
    ))}
    <div className="flex h-[16px] w-[42px] items-center justify-center self-end rounded-t-[3px] bg-[#303030] text-[#d8d8d8]">
      Layout
    </div>
    <div className="ml-[8px] flex h-[16px] self-end">
      {workspaces.map((w) => (
        <div key={w.label} className={`flex items-center whitespace-nowrap ${w.cls}`}>
          {w.label}
        </div>
      ))}
    </div>
    <div className="flex h-[16px] w-[12px] items-center self-end">
      <Plus size={10} />
    </div>
    <div className="flex items-center pt-[2px]">
      <div className="flex h-[16px] w-[24px] items-center justify-center gap-[1px] rounded-l-[3px] bg-[#2c2c2c]">
        <SceneIcon s={12} />
        <Chev />
      </div>
      <div className="ml-[1px] flex h-[16px] w-[84px] items-center rounded-[1px] bg-[#282828] pl-[5px] text-[#cfcfcf]">
        <span>Scene</span>
        <Pin size={10} className="ml-auto mr-[3px] rotate-45 text-[#777]" />
      </div>
      <div className="flex h-[16px] w-[16px] items-center justify-center bg-[#4a4a4a]">
        <Copy size={10} className="text-[#ddd]" />
      </div>
      <div className="flex h-[16px] w-[14px] items-center justify-center rounded-r-[3px] bg-[#383838]">
        <X size={9} className="text-[#555]" />
      </div>
      <div className="ml-[-1px] flex h-[16px] w-[24px] items-center justify-center gap-[1px] rounded-l-[3px] bg-[#2c2c2c]">
        <ImageIcon bg="#ccc" s={12} />
        <Chev />
      </div>
      <div className="ml-[1px] flex h-[16px] w-[62px] items-center bg-[#282828] pl-[5px] text-[#cfcfcf]">ViewLayer</div>
      <div className="flex h-[16px] w-[15px] items-center justify-center bg-[#4a4a4a]">
        <Copy size={10} className="text-[#ddd]" />
      </div>
      <div className="flex h-[16px] w-[14px] items-center justify-center rounded-r-[3px] bg-[#383838]">
        <X size={9} className="text-[#555]" />
      </div>
    </div>
  </div>
);

export default function App() {
  return (
    <div className="flex h-[720px] w-[1280px] justify-center overflow-hidden bg-black font-['Roboto',sans-serif] text-[9.5px]">
      <div className="flex w-[1104px] flex-col bg-[#181818]">
        <TopBar />
        <div className="flex h-[680px]">
          <div className="flex w-[916px] flex-col">
            <Viewport />
            <Timeline />
          </div>
          <div className="ml-[3px] w-[185px]">
            <Outliner />
            <Properties />
          </div>
        </div>
        <div className="flex h-[16px] items-center justify-between pt-[1px] pr-[7px] pl-[5px] text-[#777]">
          <div className="flex items-center gap-[2px]">
            <svg width="10" height="13" viewBox="0 0 10 13" fill="none">
              <rect x="0.5" y="0.5" width="9" height="12" rx="3" stroke="#888" />
              <rect x="1" y="1" width="4" height="5" fill="#888" />
            </svg>
            <span>Cancel</span>
          </div>
          <span>4.5.3</span>
        </div>
      </div>
    </div>
  );
}
